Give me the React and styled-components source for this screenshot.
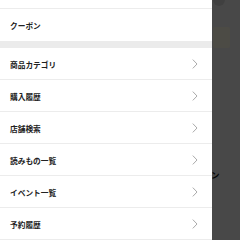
import React from "react";
import styled, { createGlobalStyle } from "styled-components";

const Global = createGlobalStyle`
  html, body {
    margin: 0;
    padding: 0;
    background: #ffffff;
  }
  body {
    font-family: "Noto Sans CJK JP", "Noto Sans", sans-serif;
  }
`;

const Screen = styled.div`
  position: relative;
  width: 240px;
  height: 240px;
  overflow: hidden;
  background: #f2f2f2;
`;

/* page that sits under the drawer and scrim */
const BackPage = styled.div`
  position: absolute;
  inset: 0;
  display: flex;
  flex-direction: column;
  padding-left: 213px;
`;

const Avatar = styled.div`
  width: 12px;
  height: 12px;
  margin-top: -6px;
  border-radius: 50%;
  background: #d8d8d8;
`;

const Banner = styled.div`
  width: 17px;
  height: 21px;
  margin-top: 21px;
  border-radius: 2px;
  background: #fffbe6;
`;

const BackText = styled.div`
  margin-top: 120px;
  margin-left: -2px;
  font-size: 8.5px;
  font-weight: 700;
  color: #111;
  line-height: 12px;
`;

const Scrim = styled.div`
  position: absolute;
  inset: 0;
  background: rgba(0, 0, 0, 0.7);
`;

const Drawer = styled.nav`
  position: absolute;
  top: 0;
  left: 0;
  bottom: 0;
  width: 212px;
  background: #fff;
  display: flex;
  flex-direction: column;
  overflow: hidden;
`;

const Partial = styled.div`
  height: 10px;
  border-bottom: 1px solid #ececec;
`;

const Item = styled.div`
  flex: none;
  height: ${({ h }) => h || 31}px;
  display: flex;
  align-items: center;
  justify-content: space-between;
  padding: 1px 14px 0 10px;
  box-sizing: border-box;
  border-bottom: ${({ last }) => (last ? "none" : "1px solid #ececec")};
  font-size: 7.7px;
  font-weight: 700;
  color: #222;
`;

const Band = styled.div`
  flex: none;
  height: 7px;
  background: #ebebeb;
`;

const Chevron = () => (
  <svg width="6" height="10" viewBox="0 0 6 10">
    <path d="M0.8 0.6 L5 5 L0.8 9.4" fill="none" stroke="#a0a0a0" strokeWidth="0.9" />
  </svg>
);

const menu = ["商品カテゴリ", "購入履歴", "店舗検索", "読みもの一覧", "イベント一覧", "予約履歴"];

export default function App() {
  return (
    <>
      <Global />
      <Screen>
        <BackPage>
          <Avatar />
          <Banner />
          <BackText>ン</BackText>
        </BackPage>
        <Scrim />
        <Drawer>
          <Partial />
          <Item h={32} last>
            クーポン
          </Item>
          <Band />
          {menu.map((label) => (
            <Item key={label} h={32}>
              {label}
              <Chevron />
            </Item>
          ))}
        </Drawer>
      </Screen>
    </>
  );
}
